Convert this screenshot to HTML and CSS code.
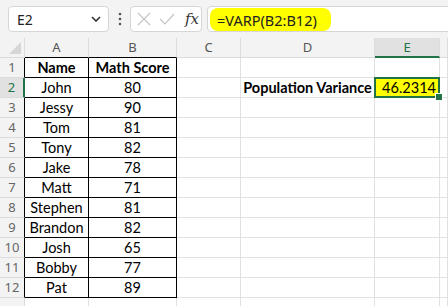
FILE: index.html
```html
<!DOCTYPE html>
<html lang="en">
<head>
    <meta charset="UTF-8">
    <meta name="viewport" content="width=device-width, initial-scale=1.0">
    <title>VARP</title>
    <link rel="stylesheet" href="styles.css">
</head>
<body>
    <div class="toolbar">
        <div class="name-box">
            <span>E2</span>
            <svg class="chevron" width="10" height="6" viewBox="0 0 10 6"><path d="M1 1 L5 5 L9 1" fill="none" stroke="#333" stroke-width="1.6"/></svg>
        </div>
        <svg class="dots" width="4" height="14" viewBox="0 0 4 14"><circle cx="2" cy="2" r="1.3" fill="#555"/><circle cx="2" cy="7" r="1.3" fill="#555"/><circle cx="2" cy="12" r="1.3" fill="#555"/></svg>
        <div class="fx-box">
            <svg width="14" height="14" viewBox="0 0 14 14"><path d="M1 1 L13 13 M13 1 L1 13" stroke="#c4c4c4" stroke-width="1.2"/></svg>
            <svg width="16" height="14" viewBox="0 0 16 14"><path d="M1 7 L6 12 L15 2" fill="none" stroke="#c4c4c4" stroke-width="1.2"/></svg>
            <span class="fx">fx</span>
        </div>
        <div class="formula">
            <span class="highlight">=VARP(B2:B12)</span>
        </div>
    </div>

    <div class="sheet">
        <div class="hdr corner"><svg width="12" height="12" viewBox="0 0 12 12"><path d="M12 0 L12 12 L0 12 Z" fill="#d6d6d6"/></svg></div>
        <div class="hdr col">A</div>
        <div class="hdr col">B</div>
        <div class="hdr col plain">C</div>
        <div class="hdr col plain">D</div>
        <div class="hdr col plain active">E</div>
        <div class="hdr col plain"></div>

        <div class="hdr row">1</div>
        <div class="cell tb bold">Name</div>
        <div class="cell tb bold">Math Score</div>
        <div class="cell"></div>
        <div class="cell"></div>
        <div class="cell"></div>
        <div class="cell"></div>

        <div class="hdr row active">2</div>
        <div class="cell tb">John</div>
        <div class="cell tb">80</div>
        <div class="cell"></div>
        <div class="cell bold label">Population Variance</div>
        <div class="cell result">46.2314</div>
        <div class="cell"></div>

        <div class="hdr row">3</div>
        <div class="cell tb">Jessy</div>
        <div class="cell tb">90</div>
        <div class="cell"></div><div class="cell"></div><div class="cell"></div><div class="cell"></div>

        <div class="hdr row">4</div>
        <div class="cell tb">Tom</div>
        <div class="cell tb">81</div>
        <div class="cell"></div><div class="cell"></div><div class="cell"></div><div class="cell"></div>

        <div class="hdr row">5</div>
        <div class="cell tb">Tony</div>
        <div class="cell tb">82</div>
        <div class="cell"></div><div class="cell"></div><div class="cell"></div><div class="cell"></div>

        <div class="hdr row">6</div>
        <div class="cell tb">Jake</div>
        <div class="cell tb">78</div>
        <div class="cell"></div><div class="cell"></div><div class="cell"></div><div class="cell"></div>

        <div class="hdr row">7</div>
        <div class="cell tb">Matt</div>
        <div class="cell tb">71</div>
        <div class="cell"></div><div class="cell"></div><div class="cell"></div><div class="cell"></div>

        <div class="hdr row">8</div>
        <div class="cell tb">Stephen</div>
        <div class="cell tb">81</div>
        <div class="cell"></div><div class="cell"></div><div class="cell"></div><div class="cell"></div>

        <div class="hdr row">9</div>
        <div class="cell tb">Brandon</div>
        <div class="cell tb">82</div>
        <div class="cell"></div><div class="cell"></div><div class="cell"></div><div class="cell"></div>

        <div class="hdr row">10</div>
        <div class="cell tb">Josh</div>
        <div class="cell tb">65</div>
        <div class="cell"></div><div class="cell"></div><div class="cell"></div><div class="cell"></div>

        <div class="hdr row">11</div>
        <div class="cell tb">Bobby</div>
        <div class="cell tb">77</div>
        <div class="cell"></div><div class="cell"></div><div class="cell"></div><div class="cell"></div>

        <div class="hdr row">12</div>
        <div class="cell tb">Pat</div>
        <div class="cell tb">89</div>
        <div class="cell"></div><div class="cell"></div><div class="cell"></div><div class="cell"></div>

        <div class="hdr row last"></div>
        <div class="cell"></div><div class="cell"></div><div class="cell"></div><div class="cell"></div><div class="cell"></div><div class="cell"></div>
    </div>
</body>
</html>
```

FILE: styles.css
```css
* {
    box-sizing: border-box;
}

body {
    margin: 0;
    width: 448px;
    height: 306px;
    overflow: hidden;
    background: #fff;
    font-family: 'Noto Sans', sans-serif;
}

.toolbar {
    display: flex;
    align-items: flex-start;
    height: 38px;
    padding: 6px 0 0 8px;
    background: #f3f3f3;
    overflow: hidden;
}

.name-box {
    display: flex;
    align-items: center;
    justify-content: space-between;
    width: 101px;
    height: 26px;
    padding: 0 7px 0 8px;
    background: #fff;
    border: 1px solid #d6d6d6;
    border-radius: 4px;
    font-size: 14px;
    color: #222;
}

.dots {
    margin: 6px 8px 0 9px;
}

.fx-box {
    display: flex;
    align-items: center;
    gap: 8px;
    width: 72px;
    height: 26px;
    padding: 0 0 0 6px;
    background: #fff;
    border: 1px solid #d6d6d6;
    border-radius: 4px;
}

.fx {
    font-family: 'DejaVu Serif', serif;
    font-style: italic;
    font-size: 15px;
    color: #333;
    margin-left: 2px;
}

.formula {
    flex: 1;
    height: 26px;
    margin: 0 -10px 0 5px;
    padding: 1px 0 0 2px;
    background: #fff;
    border: 1px solid #d6d6d6;
    border-radius: 4px;
}

.highlight {
    display: inline-block;
    height: 23px;
    padding: 1px 14px 0 7px;
    background: #ffff00;
    border-radius: 8px;
    font-size: 14.5px;
    color: #222;
    line-height: 22px;
}

.sheet {
    display: grid;
    grid-template-columns: 25px 64px 88px 64px 134px 65px 1fr;
    grid-auto-rows: 20px;
}

.hdr {
    background: #f3f3f3;
    border-right: 1px solid #dcdcdc;
    border-bottom: 1px solid #dcdcdc;
    font-size: 13px;
    color: #555;
    text-align: center;
    line-height: 19px;
}

.hdr.row {
    color: #666;
    border-right-color: #000;
}

.hdr.corner {
    display: flex;
    align-items: flex-end;
    justify-content: flex-end;
    padding: 0 3px 3px 0;
}

.hdr.col {
    border-bottom-color: #000;
}

.hdr.col.plain {
    border-bottom-color: #dcdcdc;
}

.hdr.row.last {
    border-right-color: #dcdcdc;
}

.hdr.col.active {
    background: #e1e1e1;
    color: #217346;
    border-bottom: 2px solid #217346;
}

.hdr.row.active {
    background: #e1e1e1;
    color: #217346;
    border-right: 2px solid #217346;
}

.cell {
    border-right: 1px solid #e1e1e1;
    border-bottom: 1px solid #e1e1e1;
    font-family: 'Lato', sans-serif;
    font-size: 14.5px;
    color: #000;
    text-align: center;
    line-height: 20px;
    white-space: nowrap;
}

.cell.tb {
    border-right-color: #000;
    border-bottom-color: #000;
}

.bold {
    font-weight: 700;
}

.label {
    text-align: center;
}

.result {
    position: relative;
    background: #ffff00;
    text-align: right;
    padding-right: 3px;
}

.result::after {
    content: '';
    position: absolute;
    top: -1px;
    left: -1px;
    right: -1px;
    bottom: -1px;
    border: 2px solid #217346;
}

.result::before {
    content: '';
    position: absolute;
    right: -4px;
    bottom: -4px;
    width: 6px;
    height: 6px;
    background: #217346;
    border: 1px solid #fff;
    z-index: 1;
}
```
